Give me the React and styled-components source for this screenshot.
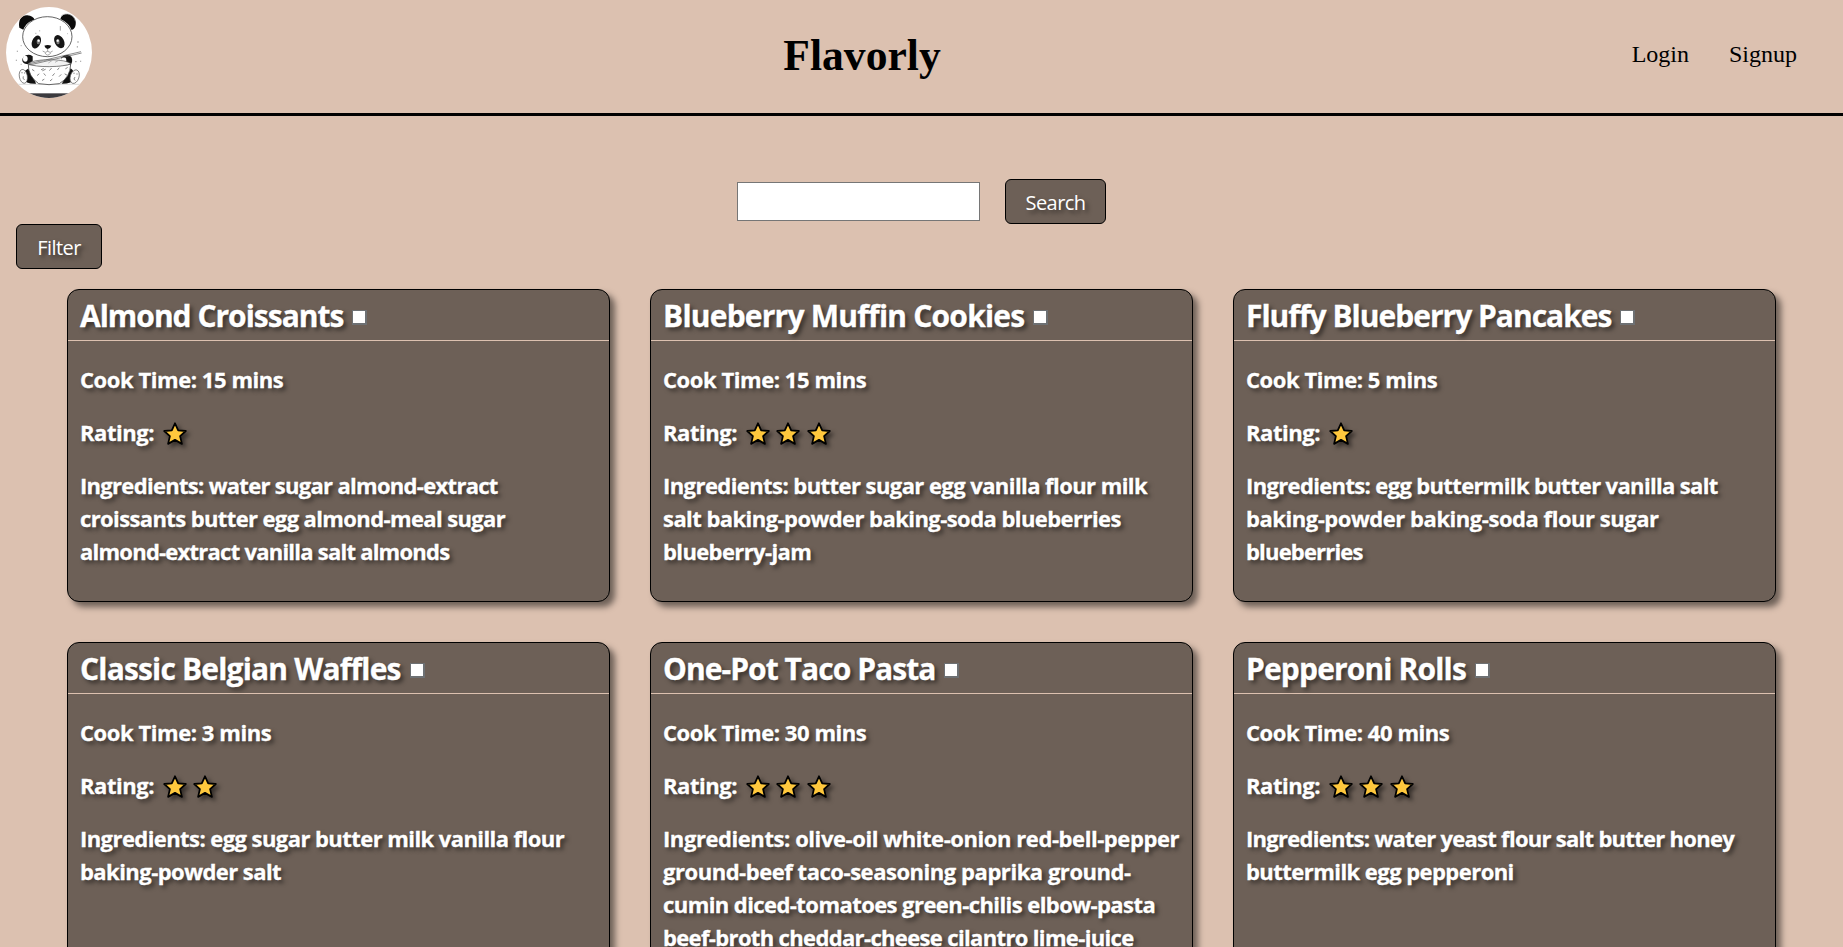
import React from "react";
import styled, { createGlobalStyle } from "styled-components";

const Global = createGlobalStyle`
  * { box-sizing: border-box; }
  html, body { margin: 0; height: 100%; overflow: hidden; background: #dcc1b0; }
`;

const Page = styled.div`
  width: 100%;
  min-height: 947px;
  background: #dcc1b0;
  font-family: "Open Sans", "Segoe UI", sans-serif;
`;

const Header = styled.header`
  display: grid;
  grid-template-columns: 150px 1fr 269px;
  height: 116px;
  border-bottom: 3px solid #000;
  font-family: "Liberation Serif", "Times New Roman", serif;
  color: #000;
`;

const Logo = styled.svg`
  width: 86px;
  height: 91px;
  margin: 7px 0 0 6px;
  display: block;
`;

const Brand = styled.h1`
  margin: 0;
  padding-top: 29px;
  text-align: center;
  font-size: 43.6px;
  line-height: 52px;
  font-weight: 700;
`;

const Nav = styled.nav`
  display: flex;
  justify-content: flex-end;
  gap: 40px;
  padding: 40px 46px 0 0;
  font-size: 24px;
  line-height: 28px;
`;

const NavLink = styled.a`
  color: #000;
`;

const SearchBar = styled.form`
  display: flex;
  justify-content: center;
  align-items: center;
  gap: 25px;
  height: 45px;
  margin-top: 63px;
`;

const SearchInput = styled.input`
  width: 243px;
  height: 39px;
  margin: 0;
  border: 1px solid #767676;
  border-radius: 0;
  background: #fff;
`;

const Button = styled.button`
  width: ${(p) => p.$width}px;
  height: 45px;
  padding: 2px 0 0;
  border: 1px solid #000;
  border-radius: 6px;
  background: #6d6057;
  color: #fff;
  font-family: inherit;
  font-size: 20px;
  letter-spacing: -0.55px;
  text-shadow: 3px 3px 4px rgba(0, 0, 0, 0.5);
`;

const FilterRow = styled.div`
  display: flex;
  padding-left: 16px;
`;

const Grid = styled.main`
  display: grid;
  grid-template-columns: repeat(3, 543px);
  grid-template-rows: 313px auto;
  gap: 40px;
  justify-content: center;
  margin-top: 20px;
`;

const Card = styled.article`
  border: 1px solid #000;
  border-radius: 12px;
  background: #6d6057;
  color: #fff;
  font-weight: 700;
  font-size: 22px;
  line-height: 33px;
  -webkit-text-stroke: 0.3px #fff;
  box-shadow: 5px 5px 6px rgba(0, 0, 0, 0.5);
  text-shadow: 3px 3px 4px rgba(0, 0, 0, 0.5);
`;

const CardTitle = styled.h2`
  display: flex;
  align-items: center;
  gap: 9px;
  height: 51px;
  margin: 0;
  padding: 0 12px;
  border-bottom: 1px solid #dcc1b0;
  font-size: 30px;
  letter-spacing: ${(p) => p.$track}px;
`;

const Marker = styled.span`
  width: 15px;
  height: 15px;
  margin-top: 5px;
  border: solid #6d7073;
  border-width: 1px 2px 2px 1px;
  background: #fff;
`;

const CardBody = styled.div`
  display: flex;
  flex-direction: column;
  gap: 20px;
  padding: 22px 12px 32px;
`;

const Fact = styled.p`
  display: flex;
  align-items: center;
  margin: 0;
  white-space: nowrap;
  letter-spacing: -0.44px;
`;

const Ingredients = styled.p`
  margin: 0;
  white-space: nowrap;
`;

const Line = styled.span`
  display: block;
  letter-spacing: ${(p) => p.$track}px;
`;

const Stars = styled.span`
  display: flex;
  gap: 6.3px;
  margin: 2px 0 0 9px;
`;

const StarIcon = styled.svg`
  width: 24px;
  height: 24px;
  filter: drop-shadow(3px 3px 2px rgba(0, 0, 0, 0.5));
`;

const Star = () => (
  <StarIcon viewBox="0 0 24 24">
    <path
      d="M12 1.3 15.2 8.3 22.8 9 17.1 14.1 18.9 21.9 12 17.9 5.1 21.9 6.9 14.1 1.2 9 8.8 8.3Z"
      fill="#ffc83d"
      stroke="#000"
      strokeWidth="1.8"
      strokeLinejoin="round"
    />
  </StarIcon>
);

const PandaLogo = () => (
  <Logo viewBox="18 20 258 273" preserveAspectRatio="none">
    <defs>
      <clipPath id="badge">
        <ellipse cx="147" cy="156.5" rx="129" ry="136.5" />
      </clipPath>
    </defs>
    <g clipPath="url(#badge)">
      <rect x="18" y="20" width="258" height="273" fill="#fff" />
      <path d="M30 252H264" stroke="#ddd" strokeWidth="3" />
      <rect x="18" y="279" width="258" height="16" fill="#3b3a3e" />
      <path d="M58 82C54 60 64 44 82 45C94 46 101 51 104 58C88 62 76 72 70 88Z" fill="#0b0b0b" />
      <path d="M181 56C184 44 196 39 207 42C223 46 231 62 226 78C223 86 219 89 214 88C209 74 197 63 181 56Z" fill="#0b0b0b" />
      <path d="M184 46C199 35 222 43 226 62" fill="none" stroke="#aaa" strokeWidth="2" />
      <ellipse cx="142" cy="109" rx="74" ry="60" fill="#fff" stroke="#444" strokeWidth="2.5" />
      <ellipse cx="109" cy="125" rx="13" ry="20" transform="rotate(22 109 125)" fill="#151515" />
      <ellipse cx="178" cy="124" rx="14" ry="21" transform="rotate(-28 178 124)" fill="#151515" />
      <ellipse cx="115" cy="124" rx="5" ry="8" fill="#777" />
      <ellipse cx="174" cy="124" rx="5" ry="8" fill="#777" />
      <circle cx="116" cy="121" r="3.5" fill="#fff" />
      <circle cx="173" cy="121" r="3.5" fill="#fff" />
      <path d="M133 136Q143 132 154 136Q151 145 143 146Q136 145 133 136Z" fill="#111" />
      <path d="M143 146V153M128 152Q136 160 143 153Q151 160 158 152M135 158Q143 171 152 158" fill="none" stroke="#777" strokeWidth="2" />
      <path d="M78 165Q66 170 67 182Q71 192 85 192L98 182V168Q88 161 78 165Z" fill="#151515" />
      <ellipse cx="76" cy="175" rx="7" ry="9" fill="#fff" />
      <path d="M184 171Q202 158 214 170Q220 182 212 194H184Z" fill="#151515" />
      <ellipse cx="191" cy="181" rx="8" ry="10" fill="#fff" />
      <path d="M84 205Q66 213 70 235Q76 251 108 250L96 218Z" fill="#111" />
      <path d="M212 204Q225 212 224 235Q214 251 185 250L205 220Z" fill="#111" />
      <ellipse cx="70" cy="228" rx="12" ry="21" transform="rotate(-10 70 228)" fill="#fff" stroke="#555" strokeWidth="2" />
      <ellipse cx="224" cy="229" rx="13" ry="21" transform="rotate(18 224 229)" fill="#fff" stroke="#555" strokeWidth="2" />
      <path d="M66 215V219M74 216V220M70 228Q66 236 74 238M222 217V221M231 219V223M225 230Q218 238 226 240" stroke="#888" strokeWidth="3" fill="none" />
      <path d="M85 192Q84 228 116 250Q147 256 178 250Q211 231 212 192Q148 203 85 192Z" fill="#fff" stroke="#444" strokeWidth="2.5" />
      <path d="M84 190Q97 179 147 178Q200 179 213 190Q195 198 148 199Q101 199 84 190Z" fill="#f2f2f2" stroke="#555" strokeWidth="2" />
      <path d="M84 191L243 154M88 194L245 158" stroke="#555" strokeWidth="2" />
      <path d="M122 184L137 178M145 188L157 180M165 186L178 179" stroke="#aaa" strokeWidth="2.5" />
      <path d="M97 208L102 211M124 208L130 205M128 211L136 207M149 210L154 204M173 208L177 203M197 205L202 202M112 225L117 221M132 220L136 225M151 241L156 237M158 226L163 220M178 228L183 223M195 221L200 224M127 240L132 237" stroke="#888" strokeWidth="3" strokeLinecap="round" />
      <path d="M181 77V91M119 90V93M106 99H109M234 122V128M232 137V142M52 151V155M62 136H65M49 178V182M62 192H65M225 184H230M242 181V185M201 100H203" stroke="#777" strokeWidth="2" />
    </g>
  </Logo>
);

const recipes = [
  {
    name: "Almond Croissants", track: -1, time: 15, rating: 1,
    lines: [["water sugar almond-extract", -0.7], ["croissants butter egg almond-meal sugar", -0.62], ["almond-extract vanilla salt almonds", -0.76]],
  },
  {
    name: "Blueberry Muffin Cookies", track: -0.78, time: 15, rating: 3,
    lines: [["butter sugar egg vanilla flour milk", -0.57], ["salt baking-powder baking-soda blueberries", -0.56], ["blueberry-jam", -0.62]],
  },
  {
    name: "Fluffy Blueberry Pancakes", track: -1, time: 5, rating: 1,
    lines: [["egg buttermilk butter vanilla salt", -0.65], ["baking-powder baking-soda flour sugar", -0.46], ["blueberries", -0.82]],
  },
  {
    name: "Classic Belgian Waffles", track: -0.82, time: 3, rating: 2,
    lines: [["egg sugar butter milk vanilla flour", -0.57], ["baking-powder salt", -0.55]],
  },
  {
    name: "One-Pot Taco Pasta", track: -0.95, time: 30, rating: 3,
    lines: [["olive-oil white-onion red-bell-pepper", -0.43], ["ground-beef taco-seasoning paprika ground-", -0.46], ["cumin diced-tomatoes green-chilis elbow-pasta", -0.57], ["beef-broth cheddar-cheese cilantro lime-juice", -0.65]],
  },
  {
    name: "Pepperoni Rolls", track: -0.85, time: 40, rating: 3,
    lines: [["water yeast flour salt butter honey", -0.72], ["buttermilk egg pepperoni", -0.55]],
  },
];

export default function App() {
  return (
    <Page>
      <Global />
      <Header>
        <PandaLogo />
        <Brand>Flavorly</Brand>
        <Nav>
          <NavLink>Login</NavLink>
          <NavLink>Signup</NavLink>
        </Nav>
      </Header>
      <SearchBar>
        <SearchInput />
        <Button type="button" $width={101}>Search</Button>
      </SearchBar>
      <FilterRow>
        <Button type="button" $width={86}>Filter</Button>
      </FilterRow>
      <Grid>
        {recipes.map((r) => (
          <Card key={r.name}>
            <CardTitle $track={r.track}>{r.name}<Marker /></CardTitle>
            <CardBody>
              <Fact>Cook Time: {r.time} mins</Fact>
              <Fact>Rating:<Stars>{Array.from({ length: r.rating }, (_, i) => <Star key={i} />)}</Stars></Fact>
              <Ingredients>
                {r.lines.map(([text, track], i) => (
                  <Line key={text} $track={track}>{i === 0 ? "Ingredients: " : ""}{text}</Line>
                ))}
              </Ingredients>
            </CardBody>
          </Card>
        ))}
      </Grid>
    </Page>
  );
}
